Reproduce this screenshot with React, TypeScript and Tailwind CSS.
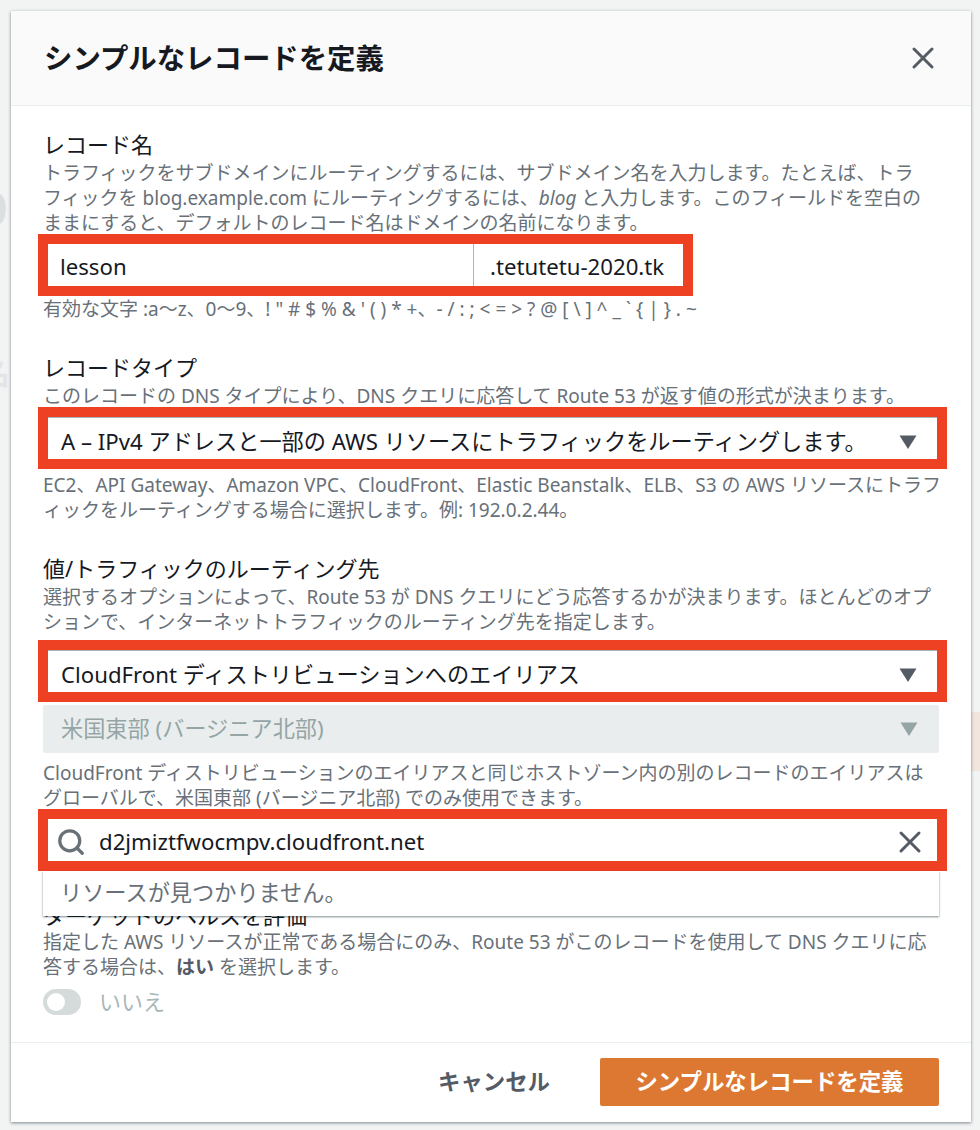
import { Search, X } from 'lucide-react'

const FONT = 'font-["Noto_Sans","Noto_Sans_CJK_JP",sans-serif]'

function Caret({ disabled }: { disabled?: boolean }) {
  return (
    <svg width="18" height="14" viewBox="0 0 18 14" className="shrink-0">
      <path d="M0.5 0.5h17L9 14z" fill={disabled ? '#95a5a6' : '#545b64'} />
    </svg>
  )
}

function Label({ children, className = '' }: { children: React.ReactNode; className?: string }) {
  return <div className={`text-[22px] leading-[28px] text-[#16191f] ${className}`}>{children}</div>
}

function Desc({ children, className = '' }: { children: React.ReactNode; className?: string }) {
  return <div className={`whitespace-nowrap text-[19px] leading-[25px] text-[#687078] ${className}`}>{children}</div>
}

function RedSelect({ children, className = '' }: { children: React.ReactNode; className?: string }) {
  return (
    <div className={`-ml-[5px] -mr-[8px] h-[62px] border-[10px] border-[#ee4023] bg-white ${className}`}>
      <div className="flex h-full items-center justify-between border-t border-[#aab7b8] pl-[13px] pr-[20px] pt-[6px]">
        {children}
      </div>
    </div>
  )
}

export default function App() {
  return (
    <div className={`${FONT} relative min-h-[1130px] overflow-hidden bg-[#f2f3f3] pt-[11px] pl-[11px]`}>
      {/* page behind the modal, only the edges show */}
      <span className="absolute -left-[18px] top-[175px] text-[44px] font-bold text-[#dcdfdf]">0</span>
      <span className="absolute -left-[20px] top-[350px] text-[30px] font-bold text-[#e2e5e5]">名</span>
      <div className="absolute right-0 top-[712px] h-[59px] w-[9px] bg-[#f1e5dd]" />

      <div className="relative flex h-[1111px] w-[960px] flex-col bg-white shadow-[0_1px_3px_rgba(0,28,36,0.5)]">
        <div className="flex h-[95px] shrink-0 items-center justify-between border-b border-[#eaeded] bg-[#fafafa] pl-[33px] pr-[30px]">
          <h1 className="text-[28.4px] font-bold text-[#16191f]">シンプルなレコードを定義</h1>
          <X className="h-[36px] w-[36px] text-[#545b64]" strokeWidth={2} />
        </div>

        <div className="relative flex-1 px-[32px] pt-[24px]">
          <Label>レコード名</Label>
          <Desc className="mt-[3px]">
            トラフィックをサブドメインにルーティングするには、サブドメイン名を入力します。たとえば、トラ<br />
            フィックを blog.example.com にルーティングするには、<i>blog</i> と入力します。このフィールドを空白の<br />
            ままにすると、デフォルトのレコード名はドメインの名前になります。
          </Desc>
          <div className="-ml-[5px] -mt-[2px] flex h-[62px] w-[655px] border-[10px] border-[#ee4023] bg-white pt-[4px] text-[22.2px] text-[#16191f]">
            <div className="relative flex w-[426px] items-center pl-[12px]">
              lesson
              <div className="absolute -top-[4px] bottom-0 right-0 w-px bg-[#aab7b8]" />
            </div>
            <div className="flex flex-1 items-center pl-[16px]">.tetutetu-2020.tk</div>
          </div>
          <Desc className="mt-[1px]">有効な文字 :a～z、0～9、! " # $ % &amp; ' ( ) * +、- / : ; &lt; = &gt; ? @ [ \ ] ^ _ ` {'{'} | {'}'} . ~</Desc>

          <Label className="mt-[31px]">レコードタイプ</Label>
          <Desc className="mt-[3px]">このレコードの DNS タイプにより、DNS クエリに応答して Route 53 が返す値の形式が決まります。</Desc>
          <RedSelect className="-mt-[2px]">
            <span className="text-[22.2px] text-[#16191f]">A – IPv4 アドレスと一部の AWS リソースにトラフィックをルーティングします。</span>
            <Caret />
          </RedSelect>
          <Desc className="mt-[4px]">
            EC2、API Gateway、Amazon VPC、CloudFront、Elastic Beanstalk、ELB、S3 の AWS リソースにトラフ<br />
            ィックをルーティングする場合に選択します。例: 192.0.2.44。
          </Desc>

          <Label className="mt-[31px]">値/トラフィックのルーティング先</Label>
          <Desc className="mt-[3px]">
            選択するオプションによって、Route 53 が DNS クエリにどう応答するかが決まります。ほとんどのオプ<br />
            ションで、インターネットトラフィックのルーティング先を指定します。
          </Desc>
          <RedSelect className="mt-[5px]">
            <span className="text-[22.2px] text-[#16191f]">CloudFront ディストリビューションへのエイリアス</span>
            <Caret />
          </RedSelect>
          <div className="mt-[3px] flex h-[48px] items-center justify-between rounded-[2px] bg-[#eaeded] pl-[18px] pr-[21px]">
            <span className="text-[22.2px] text-[#95a5a6]">米国東部 (バージニア北部)</span>
            <Caret disabled />
          </div>
          <Desc className="mt-[8px]">
            CloudFront ディストリビューションのエイリアスと同じホストゾーン内の別のレコードのエイリアスは<br />
            グローバルで、米国東部 (バージニア北部) でのみ使用できます。
          </Desc>
          <div className="-ml-[5px] -mr-[8px] -mt-[2px] flex h-[62px] items-center border-[10px] border-[#ee4023] bg-white pl-[8px] pr-[9px] pt-[4px] text-[22.2px] text-[#16191f]">
            <Search className="h-[30px] w-[30px] text-[#687078]" strokeWidth={2.6} />
            <span className="ml-[13px] flex-1">d2jmiztfwocmpv.cloudfront.net</span>
            <X className="h-[36px] w-[36px] text-[#545b64]" strokeWidth={2} />
          </div>

          <div className="relative">
            <div className="absolute inset-x-0 top-0 z-10 flex h-[45px] items-center bg-white pb-[2px] pl-[17px] text-[22.2px] text-[#687078] shadow-[0_1px_2px_rgba(0,28,36,0.5)]">
              リソースが見つかりません。
            </div>
            <Label className="pt-[30px]">ターゲットのヘルスを評価</Label>
          </div>
          <Desc className="mt-[1px]">
            指定した AWS リソースが正常である場合にのみ、Route 53 がこのレコードを使用して DNS クエリに応<br />
            答する場合は、<b className="text-[#545b64]">はい</b> を選択します。
          </Desc>
          <div className="mt-[5px] flex items-center gap-[18px]">
            <div className="flex h-[26px] w-[38px] items-center rounded-full bg-[#d5dbdb] pl-[4px]">
              <div className="h-[18px] w-[18px] rounded-full bg-white" />
            </div>
            <span className="text-[22px] text-[#aab7b8]">いいえ</span>
          </div>
        </div>

        <div className="flex h-[80px] shrink-0 items-start justify-end border-t border-[#eaeded] pr-[32px] pt-[15px]">
          <span className="mr-[50px] flex h-[48px] items-center text-[22.4px] font-bold text-[#545b64]">キャンセル</span>
          <div className="flex h-[48px] w-[339px] items-center justify-center rounded-[2px] bg-[#dd7832] text-[22.4px] font-bold text-white">
            シンプルなレコードを定義
          </div>
        </div>
      </div>
    </div>
  )
}
